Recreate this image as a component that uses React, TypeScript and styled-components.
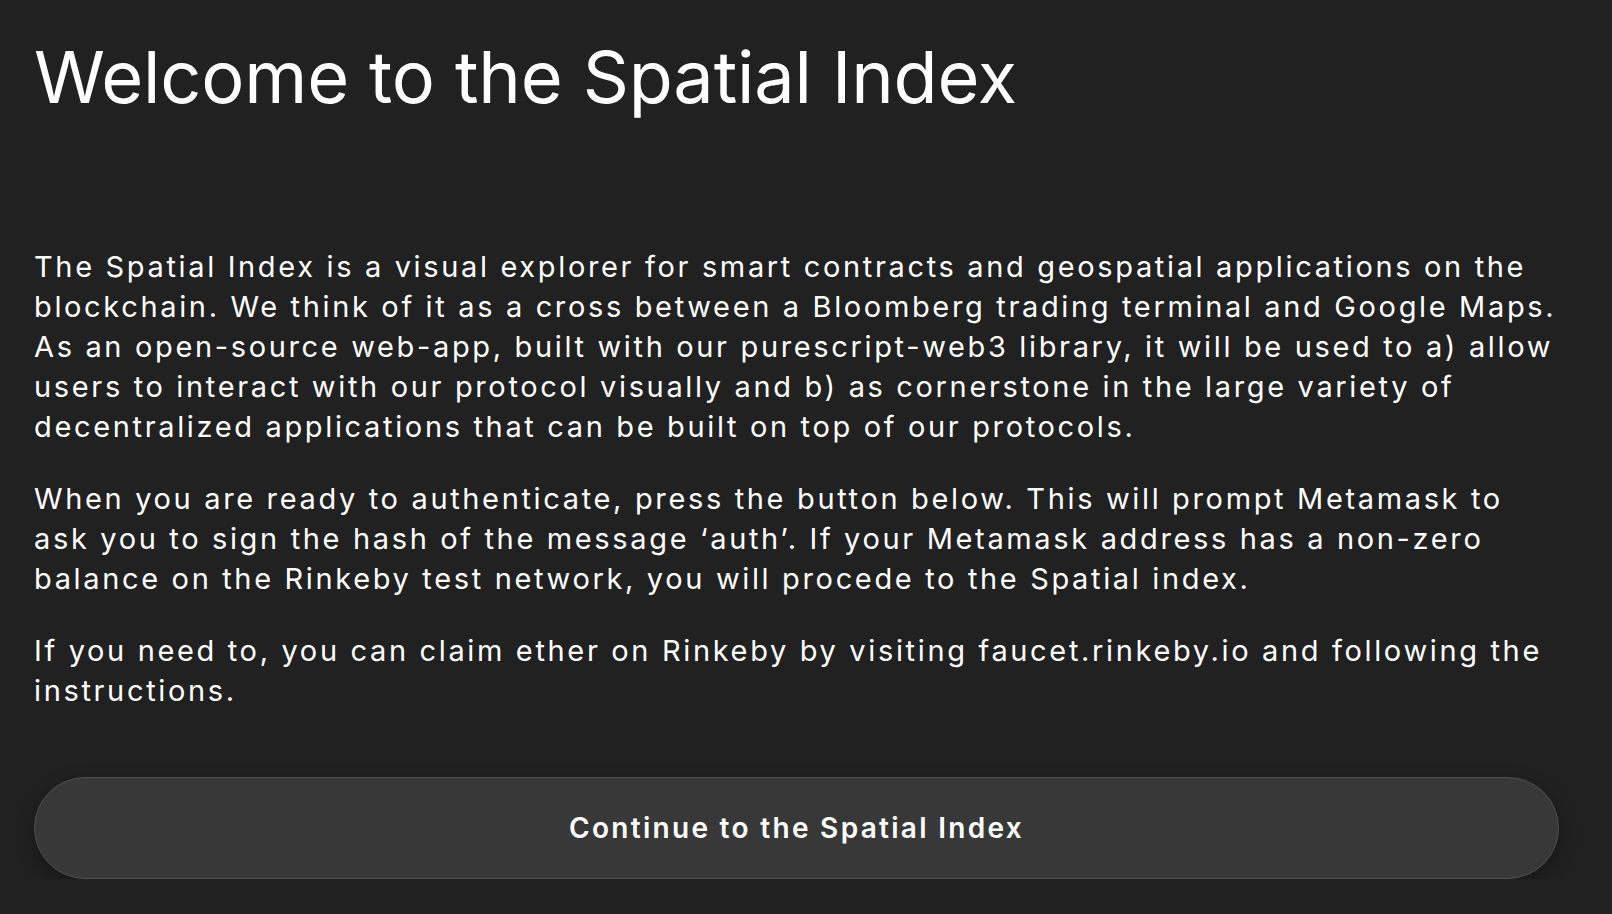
import React from "react";
import styled, { createGlobalStyle } from "styled-components";

const Global = createGlobalStyle`
  html, body { margin: 0; padding: 0; background: #212121; }
  body { font-family: Inter, "Noto Sans", sans-serif; color: #ffffff; }
`;

const Page = styled.main`
  width: 1525px;
  padding: 33px 0 0 34px;
  display: flex;
  flex-direction: column;
`;

const Title = styled.h1`
  margin: 0;
  font-size: 72px;
  font-weight: 400;
  line-height: 87px;
  letter-spacing: -0.15px;
`;

const Body = styled.section`
  margin-top: 127px;
  display: flex;
  flex-direction: column;
  gap: 32px;
`;

const Para = styled.p`
  margin: 0;
  font-size: 29px;
  line-height: 40px;
  letter-spacing: 2.65px;
  font-weight: 400;
`;

const Button = styled.button`
  margin-top: 66px;
  height: 102px;
  border-radius: 51px;
  border: 1.5px solid #4f4f4f;
  background: #383838;
  color: #ffffff;
  font-family: Inter, "Noto Sans", sans-serif;
  font-size: 28px;
  font-weight: 600;
  letter-spacing: 2.3px;
  box-shadow: 0 6px 18px rgba(0, 0, 0, 0.35);
  cursor: pointer;
`;

export default function App() {
  return (
    <>
      <Global />
      <Page>
        <Title>Welcome to the Spatial Index</Title>
        <Body>
          <Para>
            The Spatial Index is a visual explorer for smart contracts and geospatial applications on the
            blockchain. We think of it as a cross between a Bloomberg trading terminal and Google Maps.
            As an open-source web-app, built with our purescript-web3 library, it will be used to a) allow
            users to interact with our protocol visually and b) as cornerstone in the large variety of
            decentralized applications that can be built on top of our protocols.
          </Para>
          <Para>
            When you are ready to authenticate, press the button below. This will prompt Metamask to ask
            you to sign the hash of the message ‘auth’. If your Metamask address has a non-zero balance on
            the Rinkeby test network, you will procede to the Spatial index.
          </Para>
          <Para>
            If you need to, you can claim ether on Rinkeby by visiting faucet.rinkeby.io and following the
            instructions.
          </Para>
        </Body>
        <Button>Continue to the Spatial Index</Button>
      </Page>
    </>
  );
}
